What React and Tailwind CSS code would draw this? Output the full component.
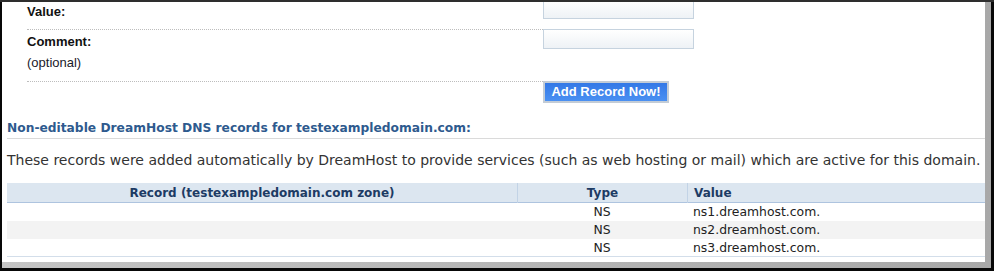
import React from "react";

const verdana = "font-['DejaVu_Sans',Verdana,sans-serif]";
const arial = "font-['Liberation_Sans',Arial,sans-serif]";

const records = ["ns1.dreamhost.com.", "ns2.dreamhost.com.", "ns3.dreamhost.com."];

function TextInput() {
  return (
    <div className="h-[20px] w-[151px] border border-[#c6d3df] bg-gradient-to-b from-white to-[#eef2f6]" />
  );
}

export default function App() {
  return (
    <div className="h-[271px] w-[994px] overflow-hidden border-t-2 border-[#2e2e2e] bg-[#080808]">
      <div className="ml-[2px] h-[266px] w-[989px] bg-gradient-to-r from-[#c4c4c4] to-[#a8a8a8]">
        <div className="h-[260px] w-[983px] overflow-hidden bg-white">
          {/* Add record form (tail end) */}
          <div className={`-mt-[3px] ml-[25px] ${arial} text-[13px] leading-[15px] text-[#111]`}>
            <div className="flex h-[30px]">
              <div className="w-[516px] pt-[5px] font-bold">Value:</div>
              <TextInput />
            </div>
            <div className="flex h-[52px]">
              <div className="w-[516px] border-t border-dotted border-[#bdbdbd] pt-[4px]">
                <div className="font-bold">Comment:</div>
                <div className="mt-[6px] text-[#1a1a2a]">(optional)</div>
              </div>
              <TextInput />
            </div>
            <div className="flex">
              <div className="w-[516px] border-t border-dotted border-[#bdbdbd]" />
              <button className="h-[22px] w-[126px] border-2 border-[#c3ccd6] bg-gradient-to-b from-[#3378e6] to-[#4a90f2] text-[13px] font-bold leading-[16px] text-white">
                Add Record Now!
              </button>
            </div>
          </div>

          {/* Non-editable records */}
          <h2 className={`ml-[5px] mt-[18px] border-b border-[#dadada] pb-[2px] ${verdana} text-[12.25px] font-bold leading-[15px] text-[#2e5a8e]`}>
            Non-editable DreamHost DNS records for testexampledomain.com:
          </h2>
          <p className={`ml-[5px] mt-[13px] whitespace-nowrap ${verdana} text-[14px] leading-[17px] text-[#333]`}>
            These records were added automatically by DreamHost to provide services (such as web hosting or mail) which are active for this domain.
          </p>

          <div className={`ml-[5px] mt-[14px] w-[978px] ${verdana}`}>
            <div className="grid h-[20px] grid-cols-[510px_170px_298px] border-b border-[#aec4df] bg-[#dce6f0] text-[12px] font-bold leading-[20px] text-[#1d3b64]">
              <div className="text-center">Record (testexampledomain.com zone)</div>
              <div className="border-l border-[#c2d3e6] text-center">Type</div>
              <div className="border-l border-[#c2d3e6] pl-[6px]">Value</div>
            </div>
            {records.map((value, i) => (
              <div
                key={value}
                className={`grid h-[18px] grid-cols-[510px_170px_298px] text-[12.4px] leading-[18px] text-[#222] ${
                  i % 2 === 1 ? "bg-[#f3f3f3]" : "bg-white"
                } ${i === records.length - 1 ? "border-b border-[#d3deea]" : ""}`}
              >
                <div />
                <div className="text-center">NS</div>
                <div className="pl-[6px]">{value}</div>
              </div>
            ))}
          </div>
        </div>
      </div>
    </div>
  );
}
